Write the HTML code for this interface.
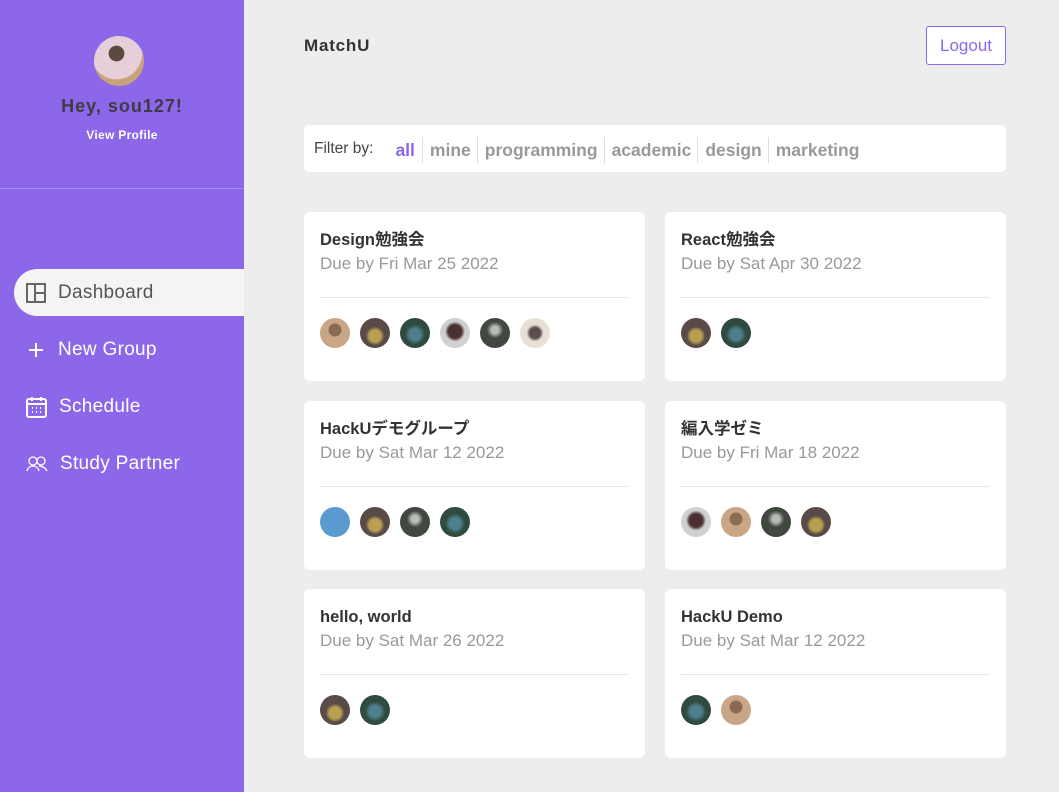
<!DOCTYPE html>
<html><head><meta charset="utf-8"><style>
*{box-sizing:border-box;margin:0;padding:0}
body{width:1059px;height:792px;background:#ededed;font-family:"Liberation Sans","Noto Sans CJK JP",sans-serif;position:relative;overflow:hidden}
.side{position:absolute;left:0;top:0;width:244px;height:792px;background:#8c67ea}
.av{position:absolute;left:94px;top:36px;width:50px;height:50px;border-radius:50%;background:radial-gradient(circle at 45% 35%,#5a4a40 0 18%,#e7cfd9 19% 60%,#c9a27a 61%)}
.hey{position:absolute;top:96px;width:244px;text-align:center;font-weight:bold;font-size:18px;color:#3e3a46;letter-spacing:1px}
.vp{position:absolute;top:128px;width:244px;text-align:center;font-weight:bold;font-size:12px;color:#fff;letter-spacing:.3px}
.hr{position:absolute;top:188px;left:0;width:244px;height:1px;background:#a58aef}
.nav{position:absolute;left:14px;width:230px;height:47px;display:flex;align-items:center;padding-left:12px;font-size:19px;letter-spacing:.3px;color:#fff}
.nav svg{margin-right:12px}
.act{background:#f4f4f4;border-radius:24px 0 0 24px;color:#555}
.logo{position:absolute;left:304px;top:36px;font-weight:bold;font-size:17px;color:#333;letter-spacing:.8px}
.logout{position:absolute;left:926px;top:26px;width:80px;height:39px;border:1px solid #8c67ea;border-radius:3px;color:#8c67ea;font-size:17px;display:flex;align-items:center;justify-content:center;background:#fff}
.filter{position:absolute;left:304px;top:125px;width:702px;height:47px;background:#fff;border-radius:5px;display:flex;align-items:center;padding-left:10px;font-size:15.5px;color:#444}
.filter b{font-size:17.5px;color:#999;padding:0 6px 0 7px;border-left:1px solid #ddd;line-height:26px;margin-top:3px}
.filter b.a{color:#8c67ea;border:none;margin-left:15px;padding-right:7px}
.card{position:absolute;width:341px;height:169px;background:#fff;border-radius:6px;padding:18px 16px}
.card h3{font-size:16.5px;color:#333;line-height:20px}
.card p{font-size:17px;color:#999;margin-top:4px}
.card .l{position:absolute;left:16px;right:16px;top:85px;height:1px;background:#e6e6e6}
.card .avs{position:absolute;left:16px;top:106px;display:flex}
.card .avs i{width:30px;height:30px;border-radius:50%;margin-right:10px;display:block}
.a1{background:radial-gradient(circle at 50% 40%,#8a6a50 0 25%,#c9a686 30%)}
.a2{background:radial-gradient(circle at 50% 60%,#b8a050 0 25%,#5a4a48 40%)}
.a3{background:radial-gradient(circle at 50% 55%,#4e7f8e 0 25%,#2f4a3e 45%)}
.a4{background:radial-gradient(circle at 50% 45%,#4a3030 0 30%,#d0d0d0 45%)}
.a5{background:radial-gradient(circle at 50% 40%,#bbb 0 15%,#404840 35%)}
.a6{background:radial-gradient(circle at 50% 50%,#5a4e4e 0 25%,#e8e0d4 40%)}
.a7{background:#5a9ad0}
</style></head><body>
<div class="side">
<div class="av"></div>
<div class="hey">Hey, sou127!</div>
<div class="vp">View Profile</div>
<div class="hr"></div>
<div class="nav act" style="top:269px"><svg width="20" height="20" viewBox="0 0 20 20" fill="none" stroke="#666" stroke-width="2"><rect x="1" y="1" width="18" height="18"/><path d="M9 1v18M9 10h10"/></svg>Dashboard</div>
<div class="nav" style="top:326px"><svg width="20" height="20" viewBox="0 0 20 20" stroke="#fff" stroke-width="2"><path d="M10 3v14M3 10h14"/></svg>New Group</div>
<div class="nav" style="top:383px"><svg width="21" height="22" viewBox="0 0 21 22" fill="none" stroke="#fff" stroke-width="2"><rect x="1" y="3" width="19" height="18" rx="2"/><path d="M1 8h19M6 1v4M15 1v4M6 12h1M10 12h1M14 12h1M6 16h1M10 16h1M14 16h1"/></svg>Schedule</div>
<div class="nav" style="top:440px"><svg width="22" height="18" viewBox="0 0 22 18" fill="none" stroke="#fff" stroke-width="1.3"><circle cx="7" cy="6" r="4"/><circle cx="15" cy="6" r="4"/><path d="M1 16c1-4 4-5 6-5s5 1 6 5M13 11c2 0 6 1 8 5"/></svg>Study Partner</div>
</div>
<div class="logo">MatchU</div>
<div class="logout">Logout</div>
<div class="filter">Filter by:<b class="a">all</b><b>mine</b><b>programming</b><b>academic</b><b>design</b><b>marketing</b></div>

<div class="card" style="left:304px;top:212px"><h3>Design勉強会</h3><p>Due by Fri Mar 25 2022</p><div class="l"></div><div class="avs"><i class="a1"></i><i class="a2"></i><i class="a3"></i><i class="a4"></i><i class="a5"></i><i class="a6"></i></div></div>
<div class="card" style="left:665px;top:212px"><h3>React勉強会</h3><p>Due by Sat Apr 30 2022</p><div class="l"></div><div class="avs"><i class="a2"></i><i class="a3"></i></div></div>
<div class="card" style="left:304px;top:401px"><h3>HackUデモグループ</h3><p>Due by Sat Mar 12 2022</p><div class="l"></div><div class="avs"><i class="a7"></i><i class="a2"></i><i class="a5"></i><i class="a3"></i></div></div>
<div class="card" style="left:665px;top:401px"><h3>編入学ゼミ</h3><p>Due by Fri Mar 18 2022</p><div class="l"></div><div class="avs"><i class="a4"></i><i class="a1"></i><i class="a5"></i><i class="a2"></i></div></div>
<div class="card" style="left:304px;top:589px"><h3>hello, world</h3><p>Due by Sat Mar 26 2022</p><div class="l"></div><div class="avs"><i class="a2"></i><i class="a3"></i></div></div>
<div class="card" style="left:665px;top:589px"><h3>HackU Demo</h3><p>Due by Sat Mar 12 2022</p><div class="l"></div><div class="avs"><i class="a3"></i><i class="a1"></i></div></div>
</body></html>
